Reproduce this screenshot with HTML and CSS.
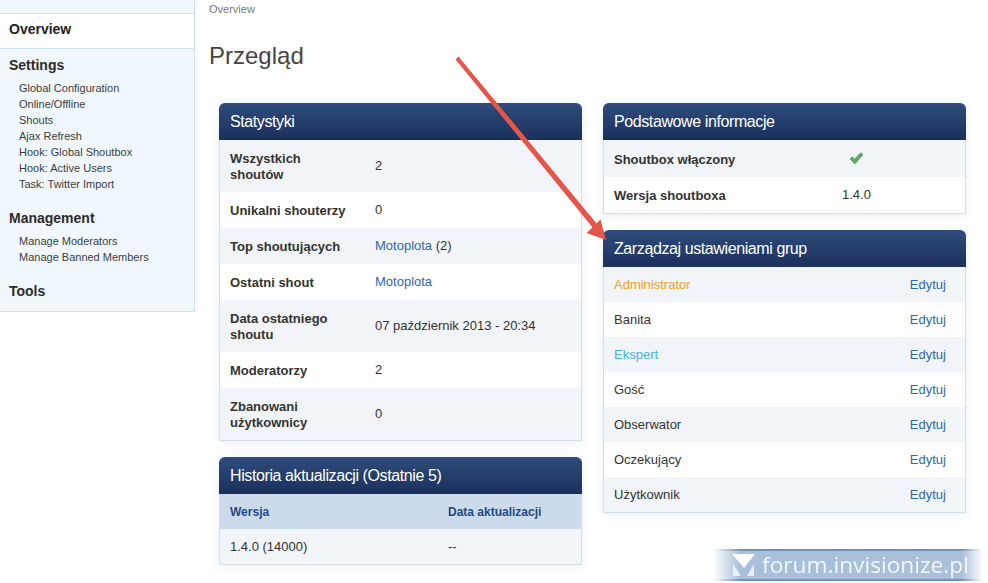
FILE: index.html
```html
<!DOCTYPE html>
<html>

<head>
  <meta charset="utf-8">
  <title>Przegląd</title>
  <link rel="stylesheet" href="styles.css">
</head>

<body>
  <div class="page">
    <div class="sidebar">
      <div class="nav-active">Overview</div>
      <div class="nav-group">
        <h3>Settings</h3>
        <a href="#">Global Configuration</a>
        <a href="#">Online/Offline</a>
        <a href="#">Shouts</a>
        <a href="#">Ajax Refresh</a>
        <a href="#">Hook: Global Shoutbox</a>
        <a href="#">Hook: Active Users</a>
        <a href="#">Task: Twitter Import</a>
      </div>
      <div class="nav-group">
        <h3>Management</h3>
        <a href="#">Manage Moderators</a>
        <a href="#">Manage Banned Members</a>
      </div>
      <div class="nav-group">
        <h3>Tools</h3>
      </div>
    </div>

    <div class="main">
      <div class="breadcrumb">Overview</div>
      <h1>Przegląd</h1>

      <div class="columns">
        <div class="column">
          <div class="box">
            <div class="box-head">Statystyki</div>
            <table class="stats">
              <tr class="alt"><th>Wszystkich shoutów</th><td>2</td></tr>
              <tr><th>Unikalni shouterzy</th><td>0</td></tr>
              <tr class="alt"><th>Top shoutujących</th><td><a href="#">Motoplota</a> (2)</td></tr>
              <tr><th>Ostatni shout</th><td><a href="#">Motoplota</a></td></tr>
              <tr class="alt"><th>Data ostatniego shoutu</th><td>07 październik 2013 - 20:34</td></tr>
              <tr><th>Moderatorzy</th><td>2</td></tr>
              <tr class="alt"><th>Zbanowani użytkownicy</th><td>0</td></tr>
            </table>
          </div>

          <div class="box">
            <div class="box-head">Historia aktualizacji (Ostatnie 5)</div>
            <table class="history">
              <tr class="head-row"><th>Wersja</th><th>Data aktualizacji</th></tr>
              <tr class="alt"><td>1.4.0 (14000)</td><td>--</td></tr>
            </table>
          </div>
        </div>

        <div class="column">
          <div class="box">
            <div class="box-head">Podstawowe informacje</div>
            <table class="info">
              <tr class="alt">
                <th>Shoutbox włączony</th>
                <td>
                  <svg class="check" width="15" height="13" viewBox="0 0 16 14">
                    <path d="M1 7.5 L3.5 5.2 L6 7.6 L12.6 .8 L15 3 L6.2 13 Z" fill="#62ac62" stroke="#3f8a45" stroke-width=".6" />
                  </svg>
                </td>
              </tr>
              <tr><th>Wersja shoutboxa</th><td>1.4.0</td></tr>
            </table>
          </div>

          <div class="box">
            <div class="box-head">Zarządzaj ustawieniami grup</div>
            <table class="groups">
              <tr class="alt"><td><span class="admin">Administrator</span></td><td class="edit"><a href="#">Edytuj</a></td></tr>
              <tr><td>Banita</td><td class="edit"><a href="#">Edytuj</a></td></tr>
              <tr class="alt"><td><span class="expert">Ekspert</span></td><td class="edit"><a href="#">Edytuj</a></td></tr>
              <tr><td>Gość</td><td class="edit"><a href="#">Edytuj</a></td></tr>
              <tr class="alt"><td>Obserwator</td><td class="edit"><a href="#">Edytuj</a></td></tr>
              <tr><td>Oczekujący</td><td class="edit"><a href="#">Edytuj</a></td></tr>
              <tr class="alt"><td>Użytkownik</td><td class="edit"><a href="#">Edytuj</a></td></tr>
            </table>
          </div>
        </div>
      </div>
    </div>

    <!-- annotation drawn over the screenshot -->
    <svg class="arrow" width="160" height="195" viewBox="450 50 160 195">
      <path d="M455.5 59.5 L458.5 56.5 L597 224 L593 228 Z" fill="#e5564a" />
      <path d="M606 240 L586.5 233 L600.5 219.5 Z" fill="#e5564a" />
    </svg>

    <div class="watermark">
      <svg class="watermark-logo" width="23" height="22" viewBox="0 0 23 22">
        <path d="M0 0 H23 L12 14 Z" fill="#fff" />
        <path d="M1 10 L9 22 H1 Z" fill="#e8eff6" />
        <path d="M22 10 V22 H15 Z" fill="#e8eff6" />
      </svg>
      <span>forum.invisionize.pl</span>
    </div>
  </div>
</body>

</html>
```

FILE: styles.css
```css
* {
  box-sizing: border-box;
}

body {
  margin: 0;
  font-family: "Liberation Sans", Arial, sans-serif;
  font-size: 13px;
  line-height: 16px;
  color: #333;
  background: #fff;
}

a {
  color: #2f69a8;
  text-decoration: none;
}

.page {
  position: relative;
  display: flex;
  height: 583px;
  overflow: hidden;
}

/* sidebar */
.sidebar {
  flex: none;
  align-self: flex-start;
  width: 195px;
  height: 312px;
  padding-top: 13px;
  background: #f0f8fe;
  border-right: 1px solid #c9e2f1;
  border-bottom: 1px solid #c9e2f1;
}

.nav-active {
  height: 36px;
  padding: 7px 9px;
  background: #fff;
  border-top: 1px solid #c9e2f1;
  border-bottom: 1px solid #c9e2f1;
  font-size: 14px;
  font-weight: bold;
  color: #222;
}

.nav-group {
  padding-bottom: 10px;
}

.nav-group h3 {
  margin: 0;
  padding: 8px 9px 7px;
  font-size: 14px;
  line-height: 16px;
  color: #2b2b2b;
}

.nav-group a {
  display: block;
  padding-left: 19px;
  font-size: 11px;
  line-height: 16px;
  color: #3c3c3c;
}

/* main */
.main {
  flex: 1;
  padding-left: 14px;
}

.breadcrumb {
  padding-top: 2px;
  font-size: 11px;
  line-height: 14px;
  color: #777;
}

h1 {
  margin: 25px 0 32px;
  font-size: 24px;
  line-height: 30px;
  font-weight: normal;
  color: #444;
}

.columns {
  display: flex;
  gap: 21px;
  padding-left: 10px;
}

.column {
  width: 363px;
}

.box {
  margin-bottom: 16px;
  background: #fff;
  border: 1px solid #d3dfea;
  border-top: 0;
  border-radius: 6px 6px 0 0;
  box-shadow: 0 2px 10px rgba(60, 80, 110, .1);
}

.box-head {
  height: 37px;
  margin: 0 -1px;
  padding: 10px 11px;
  font-size: 16px;
  line-height: 18px;
  letter-spacing: -.4px;
  color: #fff;
  background: linear-gradient(#2e4c7c, #1b305c);
  border-radius: 6px 6px 0 0;
}

table {
  width: 100%;
  border-collapse: collapse;
  table-layout: fixed;
}

th,
td {
  padding: 10px;
  font-size: 13px;
  text-align: left;
}

th {
  padding-top: 11px;
  padding-bottom: 9px;
  color: #333;
}

.alt {
  background: #f1f4f8;
}

.stats th {
  width: 145px;
  padding-right: 18px;
}

.info th {
  width: 144px;
  padding-right: 0;
}

.info td {
  text-align: center;
}

.info .alt th {
  height: 37px;
}

.check {
  display: block;
  margin: 0 auto;
}

.history th:first-child,
.history td:first-child {
  width: 218px;
}

.history th,
.history td {
  height: 35px;
  padding: 9px 10px;
}

.head-row {
  background: #cbdbec;
}

.head-row th {
  font-size: 12px;
  color: #1f4a85;
}

.groups td {
  height: 35px;
  padding: 9px 10px;
}

.groups .edit {
  width: 90px;
  padding-right: 19px;
  text-align: right;
}

.admin {
  color: #f0a020;
}

.expert {
  color: #3fb5dc;
}

/* overlays */
.arrow {
  position: absolute;
  left: 450px;
  top: 50px;
}

.watermark {
  position: absolute;
  left: 713px;
  top: 549px;
  display: flex;
  align-items: center;
  gap: 7px;
  width: 270px;
  height: 32px;
  padding-left: 19px;
  color: #f2f6fa;
  font-family: "Open Sans", sans-serif;
  font-size: 22.7px;
  background: #a9c0da;
  border-top: 2px solid #6f92b8;
  border-bottom: 2px solid #6f92b8;
  -webkit-mask-image: linear-gradient(90deg, transparent, #000 10%, #000 92%, transparent);
  mask-image: linear-gradient(90deg, transparent, #000 10%, #000 92%, transparent);
}

.watermark-logo {
  flex: none;
}
```
